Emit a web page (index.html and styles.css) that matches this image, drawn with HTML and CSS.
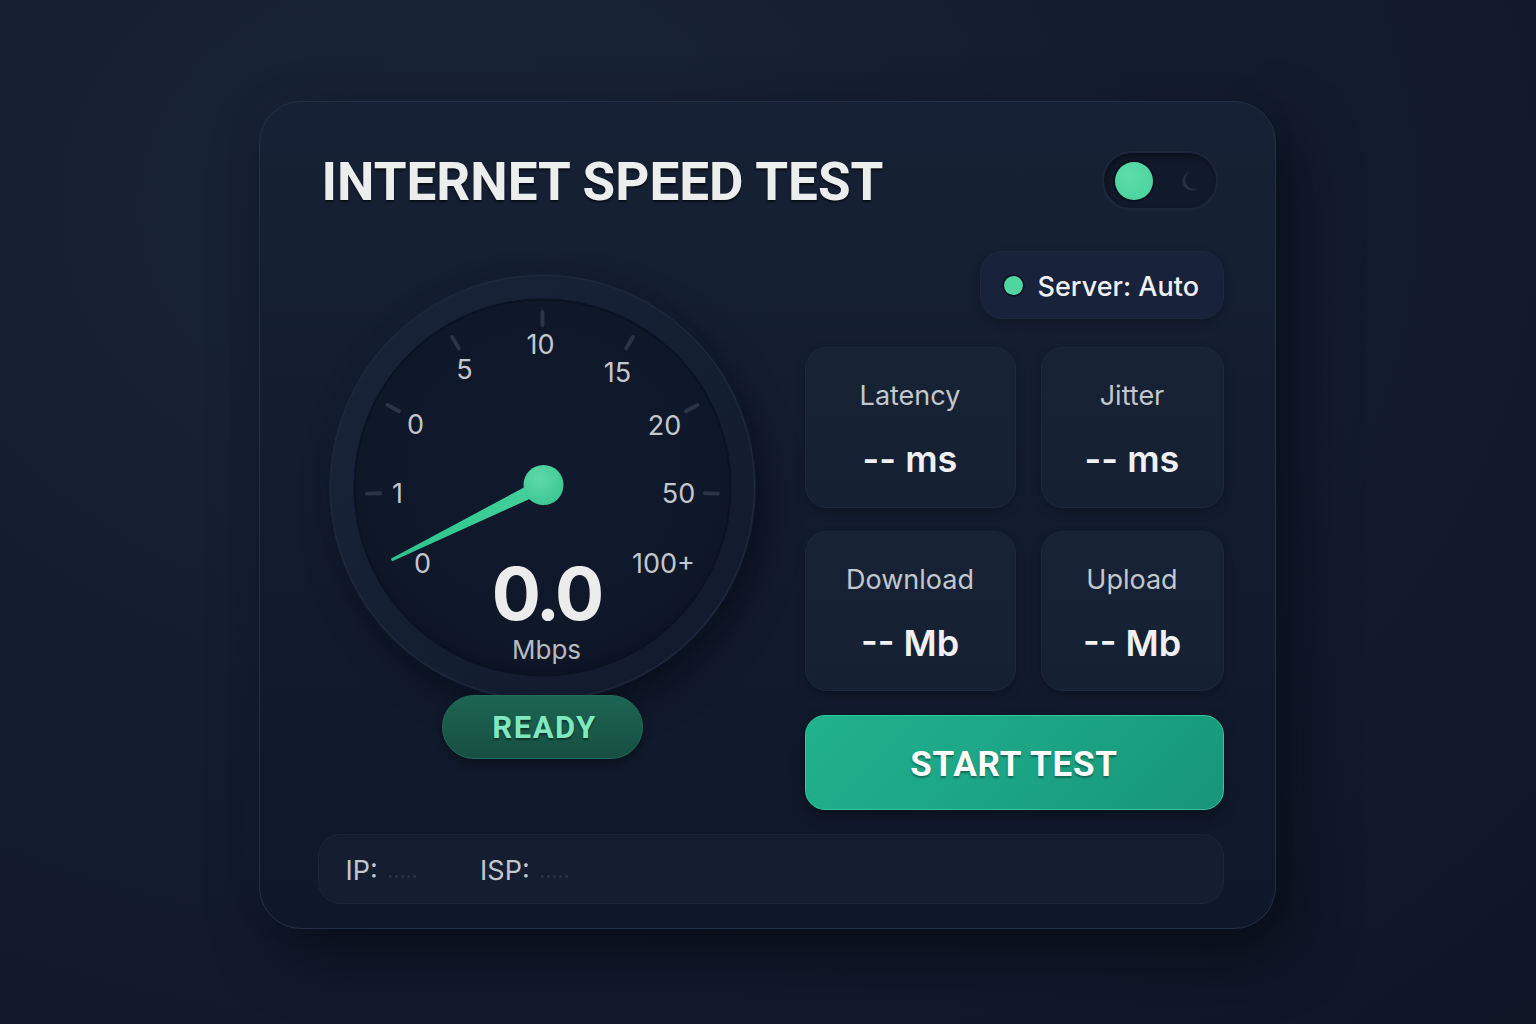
FILE: index.html
```html
<!DOCTYPE html>
<html lang="en">
<head>
<meta charset="utf-8">
<title>Internet Speed Test</title>
<link rel="stylesheet" href="styles.css">
</head>
<body>
<main class="card">
  <header class="header">
    <h1 class="title">INTERNET SPEED TEST</h1>
    <div class="toggle">
      <span class="knob"></span>
      <svg class="moon" viewBox="0 0 24 24" width="24" height="24"><path d="M10.6 2.6 A9.5 9.5 0 1 0 18.3 19.1 A8.2 8.2 0 0 1 10.6 2.6 Z" fill="#253046"/></svg>
    </div>
  </header>

  <section class="main">
    <div class="left">
      <svg class="gauge" viewBox="0 0 427 427" width="427" height="427">
        <defs>
          <linearGradient id="ring" x1="0" y1="0" x2="1" y2="1">
            <stop offset="0" stop-color="#19243a"/>
            <stop offset="1" stop-color="#111a2b"/>
          </linearGradient>
          <radialGradient id="face" cx="0.5" cy="0.45" r="0.55">
            <stop offset="0" stop-color="#101a2c"/>
            <stop offset="0.85" stop-color="#0f1829"/>
            <stop offset="1" stop-color="#0c1424"/>
          </radialGradient>
          <linearGradient id="needle" x1="0" y1="1" x2="1" y2="0">
            <stop offset="0" stop-color="#2bc48c"/>
            <stop offset="1" stop-color="#46d29c"/>
          </linearGradient>
          <radialGradient id="hub" cx="0.4" cy="0.35" r="0.7">
            <stop offset="0" stop-color="#5edaa9"/>
            <stop offset="1" stop-color="#3cc691"/>
          </radialGradient>
        </defs>
        <circle cx="213.5" cy="213.5" r="213" fill="url(#ring)"/>
        <circle cx="213.5" cy="213.5" r="212" fill="none" stroke="#1d283d" stroke-width="1.5"/>
        <circle cx="213.5" cy="213.5" r="188" fill="url(#face)"/>
        <circle cx="213.5" cy="213.5" r="188" fill="none" stroke="#0b1221" stroke-width="2"/>
        <g stroke="#2a3548" stroke-width="4" stroke-linecap="round">
          <line x1="213.5" y1="38" x2="213.5" y2="51"/>
          <line x1="213.5" y1="38" x2="213.5" y2="51" transform="rotate(-31 213.5 213.5)"/>
          <line x1="213.5" y1="38" x2="213.5" y2="51" transform="rotate(31 213.5 213.5)"/>
          <line x1="213.5" y1="38" x2="213.5" y2="51" transform="rotate(-62 213.5 213.5)"/>
          <line x1="213.5" y1="38" x2="213.5" y2="51" transform="rotate(62 213.5 213.5)"/>
          <line x1="213.5" y1="38" x2="213.5" y2="51" transform="rotate(-92 213.5 213.5)"/>
          <line x1="213.5" y1="38" x2="213.5" y2="51" transform="rotate(92 213.5 213.5)"/>
        </g>
        <g class="scale">
          <text x="211.5" y="80">10</text>
          <text x="135.5" y="105">5</text>
          <text x="288.5" y="108">15</text>
          <text x="86.5" y="160">0</text>
          <text x="335.5" y="161">20</text>
          <text x="68.5" y="229">1</text>
          <text x="349.5" y="229">50</text>
          <text x="93.5" y="299">0</text>
          <text x="334.5" y="299">100+</text>
        </g>
        <polygon points="217.6,217.2 211.4,204.8 61.8,284.7 63.2,287.3" fill="url(#needle)"/>
        <circle cx="214.5" cy="211" r="20" fill="url(#hub)"/>
        <text class="speed" x="217.5" y="346">0.0</text>
        <text class="unit" x="217.5" y="385">Mbps</text>
      </svg>
      <div class="ready">READY</div>
    </div>

    <div class="right">
      <div class="server"><span class="dot"></span>Server: Auto</div>
      <div class="stats">
        <div class="stat"><div class="label">Latency</div><div class="value">-- ms</div></div>
        <div class="stat"><div class="label">Jitter</div><div class="value">-- ms</div></div>
        <div class="stat"><div class="label">Download</div><div class="value">-- Mb</div></div>
        <div class="stat"><div class="label">Upload</div><div class="value">-- Mb</div></div>
      </div>
      <button class="start">START TEST</button>
    </div>
  </section>

  <footer class="info">
    <span class="key">IP:</span><span class="mask">•••••</span>
    <span class="key isp">ISP:</span><span class="mask">•••••</span>
  </footer>
</main>
</body>
</html>
```

FILE: styles.css
```css
* { box-sizing: border-box; }
html, body { margin: 0; height: 100%; }
body {
  width: 1536px;
  height: 1024px;
  overflow: hidden;
  font-family: Inter, "Noto Sans", "Liberation Sans", sans-serif;
  background: radial-gradient(ellipse at 30% 20%, #1a2438 0%, #141d30 45%, #0e1626 100%);
  padding-top: 101px;
}
.card {
  width: 1017px;
  height: 828px;
  margin: 0 auto;
  position: relative;
  left: -1px;
  border-radius: 42px;
  border: 1.5px solid #232f45;
  background: linear-gradient(180deg, #172135 0%, #121b2d 60%, #0f1829 100%);
  box-shadow: 18px 26px 60px rgba(4, 8, 16, 0.65), -6px -6px 30px rgba(40, 55, 80, 0.08);
  padding: 49px 49px 23px 58px;
  display: flex;
  flex-direction: column;
}
.header {
  height: 59px;
  display: flex;
  align-items: center;
  justify-content: space-between;
}
.title {
  margin: 4px 0 0 4px;
  font-family: Roboto, Inter, sans-serif;
  font-weight: 700;
  font-size: 53px;
  letter-spacing: 0;
  color: #eceded;
  line-height: 1;
  text-shadow: 0 2px 2px rgba(0,0,0,0.6);
}
.toggle {
  width: 116px;
  height: 59px;
  margin-right: 8px;
  border-radius: 30px;
  background: #111a2b;
  border: 2px solid #1d273a;
  box-shadow: inset 2px 3px 6px rgba(0,0,0,0.4), 0 1px 2px rgba(60,80,110,0.15);
  display: flex;
  align-items: center;
  justify-content: space-between;
  padding: 0 12px 0 11px;
}
.knob {
  width: 38px;
  height: 38px;
  border-radius: 50%;
  background: radial-gradient(circle at 40% 35%, #5ddca8, #47d29c);
  box-shadow: 0 0 0 2px #0b111c;
}
.moon { display: block; }
.main {
  display: flex;
  gap: 37px;
  margin-top: 40px;
}
.left {
  width: 450px;
  display: flex;
  flex-direction: column;
  align-items: center;
}
.gauge {
  display: block;
  margin-top: 24px;
  border-radius: 50%;
  box-shadow: 10px 16px 34px rgba(4, 8, 16, 0.55), -4px -4px 14px rgba(40, 55, 80, 0.08);
}
.scale text {
  font-family: Inter, "Noto Sans", sans-serif;
  font-size: 27px;
  fill: #c3c7ce;
  text-anchor: middle;
}
.speed {
  font-family: Inter, sans-serif;
  font-weight: 700;
  font-size: 73px;
  letter-spacing: -3px;
  fill: #ececec;
  text-anchor: middle;
}
.unit {
  font-family: Inter, sans-serif;
  font-size: 26px;
  fill: #b6bbc3;
  text-anchor: middle;
}
.ready {
  margin-top: -6px;
  width: 201px;
  height: 64px;
  border-radius: 32px;
  background: linear-gradient(180deg, #1c6552 0%, #174f42 100%);
  border: 1.5px solid #1f6e58;
  box-shadow: 0 4px 10px rgba(0,0,0,0.35);
  color: #7fe8c0;
  font-family: Roboto, Inter, sans-serif;
  font-weight: 700;
  font-size: 31px;
  letter-spacing: 1.5px;
  display: flex;
  align-items: center;
  justify-content: center;
  padding-left: 4px;
  text-shadow: 0 2px 2px rgba(0,0,0,0.45);
}
.right {
  width: 419px;
  display: flex;
  flex-direction: column;
}
.server {
  align-self: flex-end;
  width: 244px;
  height: 68px;
  margin-top: 1px;
  border-radius: 22px;
  background: #18223a;
  border: 1px solid #1d283d;
  box-shadow: 0 4px 10px rgba(0,0,0,0.25);
  display: flex;
  align-items: center;
  padding: 3px 0 0 23px;
  gap: 15px;
  color: #eef0f3;
  font-size: 27px;
  font-weight: 500;
}
.dot {
  width: 19px;
  height: 19px;
  border-radius: 50%;
  background: #4fd6a0;
  box-shadow: 0 0 0 1.5px #0b111c;
  margin-top: -2px;
}
.stats {
  margin-top: 28px;
  display: grid;
  grid-template-columns: 211px 183px;
  grid-template-rows: 161px 160px;
  gap: 23px 25px;
}
.stat {
  border-radius: 22px;
  background: linear-gradient(180deg, #172235 0%, #152033 100%);
  border: 1px solid #1d283c;
  box-shadow: 0 4px 10px rgba(0,0,0,0.25);
  display: flex;
  flex-direction: column;
  align-items: center;
  padding-top: 32px;
}
.label {
  font-size: 27px;
  color: #c3c7ce;
  line-height: 32px;
}
.value {
  margin-top: 27px;
  font-size: 36px;
  font-weight: 600;
  color: #eff0f2;
  line-height: 40px;
}
.start {
  margin-top: 24px;
  height: 95px;
  width: 100%;
  border-radius: 20px;
  border: 1.5px solid #2fc99d;
  background: linear-gradient(135deg, #21b18d 0%, #1ba484 55%, #179579 100%);
  box-shadow: 0 6px 14px rgba(0,0,0,0.35);
  color: #ffffff;
  font-family: Roboto, Inter, sans-serif;
  font-weight: 700;
  font-size: 35px;
  letter-spacing: 0.8px;
  text-shadow: 0 2px 2px rgba(0,0,0,0.35);
  padding: 4px 0 0;
  cursor: pointer;
}
.info {
  margin-top: 24px;
  height: 70px;
  width: 906px;
  border-radius: 22px;
  background: #141e30;
  border: 1px solid #1b2538;
  display: flex;
  align-items: center;
  padding: 3px 0 0 27px;
  font-size: 27px;
  color: #c2c6cd;
}
.mask {
  margin-left: 10px;
  font-size: 9px;
  letter-spacing: 1px;
  color: #2a3549;
  padding-top: 10px;
}
.isp { margin-left: 62px; }
```
